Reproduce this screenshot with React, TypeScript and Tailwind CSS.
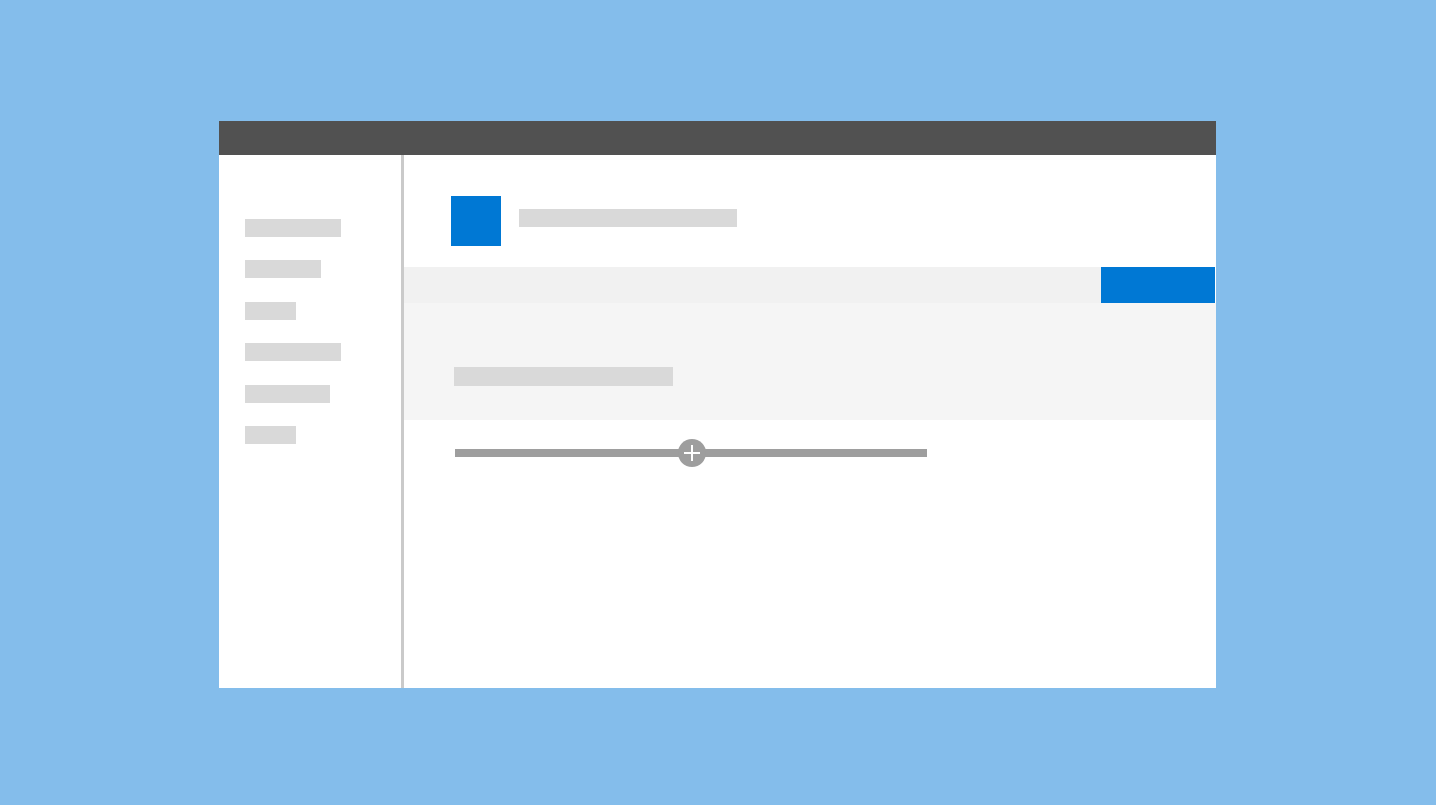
import React from "react";

const navWidths = ["w-[96px]", "w-[76px]", "w-[51px]", "w-[96px]", "w-[85px]", "w-[51px]"];

export default function App() {
    return (
        <div className="h-[805px] w-[1436px] bg-[#84bdeb] pl-[219px] pt-[121px]">
            <div className="flex h-[567px] w-[997px] flex-col">
                <div className="h-[34px] bg-[#515151]" />
                <div className="flex flex-1 bg-white">
                    {/* sidebar */}
                    <div className="flex w-[182px] flex-col gap-[23.4px] pl-[26px] pt-[64px]">
                        {navWidths.map((w, i) => (
                            <div key={i} className={`h-[18px] bg-[#d9d9d9] ${w}`} />
                        ))}
                    </div>
                    <div className="w-[3px] bg-[#cacaca]" />

                    {/* main */}
                    <div className="flex flex-1 flex-col">
                        <div className="flex items-start gap-[18px] pl-[47px] pt-[41px]">
                            <div className="h-[50px] w-[50px] bg-[#0078d4]" />
                            <div className="mt-[13px] h-[18px] w-[218px] bg-[#d9d9d9]" />
                        </div>

                        <div className="mt-[21px] flex h-[36px]">
                            <div className="flex-1 bg-[#f1f1f1]" />
                            <div className="w-[114px] bg-[#0078d4]" />
                            <div className="w-px bg-white" />
                        </div>

                        <div className="h-[117px] bg-[#f5f5f5] pl-[50px] pt-[64px]">
                            <div className="h-[19px] w-[219px] bg-[#d9d9d9]" />
                        </div>

                        <div className="pl-[51px] pt-[29px]">
                            <div className="relative h-[8px] w-[472px] bg-[#9e9e9e]">
                                <div className="absolute left-[223px] top-[-10px] flex h-[28px] w-[28px] items-center justify-center rounded-full bg-[#9e9e9e]">
                                    <svg width="18" height="18" viewBox="0 0 18 18">
                                        <path d="M9 1v16M1 9h16" stroke="white" strokeWidth="2" />
                                    </svg>
                                </div>
                            </div>
                        </div>
                    </div>
                </div>
            </div>
        </div>
    );
}
